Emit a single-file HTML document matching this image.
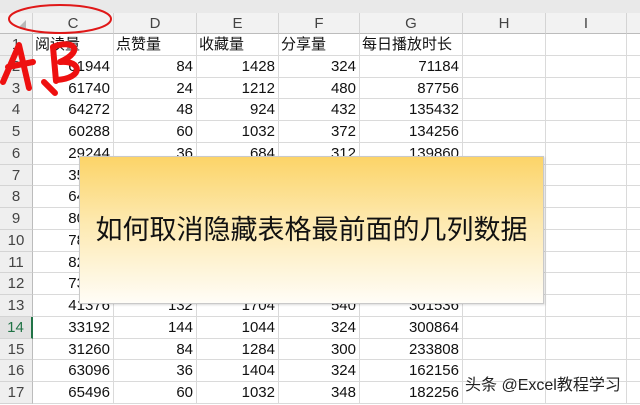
<!DOCTYPE html>
<html><head><meta charset="utf-8"><style>
*{margin:0;padding:0;box-sizing:border-box}
body{width:640px;height:405px;overflow:hidden;background:#fff;position:relative;font-family:"Liberation Sans","Noto Sans CJK SC",sans-serif}
.top{position:absolute;left:0;top:0;width:640px;height:13px;background:#e9e9e9}
.ch{position:absolute;top:13px;height:21px;background:#f2f2f2;border-right:1px solid #d4d4d4;border-bottom:1px solid #bcbcbc;color:#444;font-size:15px;text-align:center;line-height:21px}
.rh{position:absolute;left:0;width:33px;background:#efefef;border-bottom:1px solid #d4d4d4;border-right:1px solid #bcbcbc;color:#444;font-size:15px;text-align:center;line-height:21px}
.c{position:absolute;border-right:1px solid #dadada;border-bottom:1px solid #dadada;font-size:15px;line-height:21px;text-align:right;padding-right:3px;color:#111;white-space:nowrap;overflow:hidden}
.t{text-align:left;padding-left:2px}
.box{position:absolute;left:79px;top:156px;width:465px;height:148px;border:1px solid #c9c9c9;background:linear-gradient(#fcd468,#fde9b0 45%,#fffdf7);box-shadow:1px 1px 2px rgba(0,0,0,.15);font-size:27px;color:#111;text-align:center;line-height:146px;font-family:"Liberation Sans","Noto Sans CJK SC",sans-serif}
.wm{position:absolute;left:465px;top:371px;font-size:16px;color:#222;text-shadow:0 0 2px #fff}
</style></head><body>
<div class="top"></div>
<div id="g"></div>
<div class="box">如何取消隐藏表格最前面的几列数据</div>
<div class="wm">头条 @Excel教程学习</div>
<svg style="position:absolute;left:0;top:0" width="640" height="405">
<polygon points="26,28 26,20 18,28" fill="#b8b8b8"/>
<ellipse cx="60" cy="19" rx="51" ry="14" fill="none" stroke="#e01818" stroke-width="2"/>
<g fill="none" stroke="#ee1010" stroke-width="6" stroke-linecap="round" stroke-linejoin="round">
<path d="M3,82 L19,45 L29,88"/><path d="M8,67 L33,62"/><path d="M44,82 L55,93"/>
<path d="M53,47 L56,81"/><path d="M53,47 C72,39 86,50 60,62 C82,60 84,78 57,80"/>
</g>
</svg>
<script>
var cols=[["C",33,114],["D",114,197],["E",197,279],["F",279,360],["G",360,463],["H",463,546],["I",546,627],["",627,660]];
var data=[["阅读量","点赞量","收藏量","分享量","每日播放时长"],
["61944","84","1428","324","71184"],["61740","24","1212","480","87756"],["64272","48","924","432","135432"],["60288","60","1032","372","134256"],["29244","36","684","312","139860"],
["35820","48","912","336","140112"],["64580","60","1104","360","152304"],["80412","72","1236","396","168540"],["78624","84","1380","420","176328"],["82016","96","1452","456","210744"],["73188","108","1560","492","254160"],
["41376","132","1704","540","301536"],["33192","144","1044","324","300864"],["31260","84","1284","300","233808"],["63096","36","1404","324","162156"],["65496","60","1032","348","182256"]];
var h="";var rh=21.75,y0=34;
h+='<div class="ch" style="left:0;width:33px"></div>';
cols.forEach(function(c){h+='<div class="ch" style="left:'+c[1]+'px;width:'+(c[2]-c[1])+'px">'+c[0]+'</div>'});
for(var r=0;r<17;r++){var y=y0+r*rh;
h+='<div class="rh" style="top:'+y+'px;height:'+rh+'px;'+(r==13?'border-right:2px solid #217346;color:#217346;background:#e2e2e2':'')+'">'+(r+1)+'</div>';
cols.forEach(function(c,i){var v=(i<5&&data[r])?data[r][i]:"";h+='<div class="c'+(r==0?' t':'')+'" style="left:'+c[1]+'px;top:'+y+'px;width:'+(c[2]-c[1])+'px;height:'+rh+'px">'+v+'</div>'});}
document.getElementById("g").innerHTML=h;
</script>
</body></html>
